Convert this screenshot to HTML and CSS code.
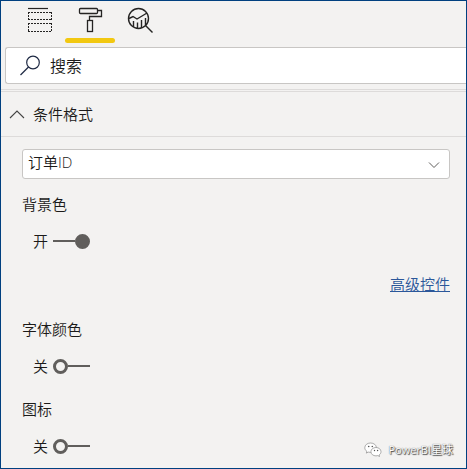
FILE: index.html
```html
<!DOCTYPE html>
<html lang="zh-CN">
<head>
  <meta charset="UTF-8" />
  <meta name="viewport" content="width=device-width, initial-scale=1.0"/>
  <title>条件格式</title>
  <link rel="stylesheet" href="styles.css">
</head>

<body>
  <main class="pane">
    <nav class="tabs">
      <button class="tab" type="button" aria-label="字段">
        <svg width="26" height="26" viewBox="0 0 26 26" fill="none" stroke="#252423">
          <path d="M1 1.500h20" stroke-width="1.200" />
          <path d="M1 5.500h24M1 12.500h24M1 16.500h24M1 24.500h24" stroke-dasharray="2 1" />
          <path d="M1.500 5v8M24.500 5v8M1.500 16v9M24.500 16v9" stroke-dasharray="2 1" />
        </svg>
      </button>
      <button class="tab active" type="button" aria-label="格式">
        <svg width="26" height="26" viewBox="0 0 26 26" fill="none" stroke="#252423" stroke-width="1.300">
          <rect x="2.500" y="1.500" width="18" height="5" rx="1" />
          <path d="M20.500 3.500h4v6h-12v4" />
          <rect x="10.500" y="13.500" width="5" height="11" />
        </svg>
      </button>
      <button class="tab" type="button" aria-label="分析">
        <svg width="26" height="26" viewBox="0 0 26 26" fill="none" stroke="#252423" stroke-width="1.400">
          <circle cx="11.500" cy="11.500" r="10" />
          <path d="M18.500 18.500l7 7" />
          <path d="M2 11.500l4-2 4 2.500 10-6" />
          <path d="M6.500 14v6M10.500 15.500v6M14.500 13v8M18.500 11v7" />
        </svg>
      </button>
    </nav>

    <label class="search">
      <svg width="22" height="22" viewBox="0 0 22 22" fill="none" stroke="#1f2a44" stroke-width="1.200">
        <circle cx="13" cy="7.500" r="6.300" />
        <path d="M8.500 12l-8 8" />
      </svg>
      <input type="text" placeholder="搜索" aria-label="搜索">
    </label>

    <button class="section-head" type="button">
      <svg width="16" height="10" viewBox="0 0 16 10" fill="none" stroke="#444" stroke-width="1.100">
        <path d="M1 9l7-7 7 7" />
      </svg>
      <span>条件格式</span>
    </button>

    <section class="options">
      <div class="select-box">
        <select aria-label="字段">
          <option>订单ID</option>
        </select>
        <svg class="arrow" width="12" height="8" viewBox="0 0 12 8" fill="none" stroke="#605e5c">
          <path d="M1 1.500l5 5 5-5" />
        </svg>
      </div>

      <div class="option">
        <label class="name" for="bg">背景色</label>
        <div class="toggle-row">
          <span>开</span>
          <input class="toggle" type="checkbox" id="bg" checked>
        </div>
        <a class="advanced" href="#">高级控件</a>
      </div>

      <div class="option">
        <label class="name" for="fc">字体颜色</label>
        <div class="toggle-row">
          <span>关</span>
          <input class="toggle" type="checkbox" id="fc">
        </div>
      </div>

      <div class="option">
        <label class="name" for="icon">图标</label>
        <div class="toggle-row">
          <span>关</span>
          <input class="toggle" type="checkbox" id="icon">
        </div>
      </div>
    </section>

    <div class="watermark">
      <svg width="18" height="16" viewBox="0 0 18 16" fill="#fff" stroke="#8a8a8a" stroke-width="0.700">
        <path d="M6.500 1C3.300 1 .8 3 .8 5.700c0 1.500.8 2.800 2 3.600l-.5 1.800 2-1c.7.200 1.500.3 2.200.3 3.300 0 5.900-2 5.900-4.700S9.800 1 6.500 1z" />
        <path d="M12 5.500c-2.900 0-5.100 1.900-5.100 4.200s2.200 4.200 5.100 4.200c.6 0 1.200-.1 1.800-.3l1.700.9-.4-1.500c1.200-.8 1.900-2 1.900-3.300 0-2.300-2.100-4.200-5-4.200z" />
        <g fill="#555" stroke="none">
          <circle cx="4.700" cy="4.500" r=".8" />
          <circle cx="8.300" cy="4.500" r=".8" />
          <circle cx="10.500" cy="8.500" r=".7" />
          <circle cx="13.600" cy="8.500" r=".7" />
        </g>
      </svg>
      <span>PowerBI星球</span>
    </div>
  </main>
</body>
</html>
```
FILE: styles.css
```css
*, *::before, *::after {
  box-sizing: border-box;
}

body {
  margin: 0;
  font-family: "Open Sans", "Noto Sans CJK SC", sans-serif;
  font-size: 15px;
  font-weight: 350;
  line-height: 20px;
  color: #1b1a19;
  background: #f3f2f1;
}

button, input, select {
  font: inherit;
  color: inherit;
}

svg {
  display: block;
  flex: none;
}

.pane {
  position: relative;
  min-height: 100vh;
  border: 1px solid #004080;
  overflow: hidden;
}

/* tabs */
.tabs {
  display: flex;
  height: 42px;
  padding-left: 14px;
}

.tab {
  display: flex;
  justify-content: center;
  width: 50px;
  padding: 6px 0 0;
  border: none;
  background: none;
  cursor: pointer;
}

.tab.active {
  position: relative;
}

.tab.active::after {
  content: "";
  position: absolute;
  left: 0;
  right: 0;
  bottom: 0;
  height: 5px;
  border-radius: 3px;
  background: #f2c811;
}

/* search */
.search {
  display: flex;
  align-items: center;
  gap: 8px;
  height: 37px;
  margin: 4px 0 5px 4px;
  padding-left: 14px;
  border: 1px solid #c8c6c4;
  border-right: none;
  border-radius: 3px 0 0 3px;
  background: #fff;
}

.search input {
  flex: 1;
  min-width: 0;
  padding: 0;
  border: none;
  outline: none;
  background: none;
  font-size: 16px;
}

.search input::placeholder {
  color: #1b1a19;
  opacity: 1;
}

.section-head {
  display: flex;
  align-items: center;
  gap: 8px;
  width: 100%;
  height: 48px;
  padding: 0 8px;
  border: solid #dddbda;
  border-width: 3px 0 1px;
  border-top-style: double;
  background: none;
  cursor: pointer;
}

/* options */
.options {
  padding: 12px 16px 10px 21px;
}

.select-box {
  position: relative;
  margin-bottom: 15px;
}

.select-box select {
  display: block;
  width: 100%;
  height: 30px;
  padding: 0 24px 4px 5px;
  border: 1px solid #c8c6c4;
  border-radius: 3px;
  background: #fff;
  appearance: none;
}

.arrow {
  position: absolute;
  right: 10px;
  top: 12px;
  pointer-events: none;
}

.option {
  display: flex;
  flex-direction: column;
  margin-bottom: 23px;
}

.option:last-child {
  margin-bottom: 0;
}

.toggle-row {
  display: flex;
  align-items: center;
  gap: 5px;
  margin: 17px 0 0 11px;
}

.toggle {
  display: flex;
  align-items: center;
  width: 37px;
  height: 15px;
  margin: 0;
  appearance: none;
  cursor: pointer;
}

.toggle::before {
  content: "";
  width: 15px;
  height: 15px;
  border: 3px solid #605e5c;
  border-radius: 50%;
}

.toggle::after {
  content: "";
  flex: 1;
  height: 2px;
  background: #605e5c;
}

.toggle:checked {
  flex-direction: row-reverse;
}

.toggle:checked::before {
  background: #605e5c;
}

.advanced {
  align-self: flex-end;
  margin: 23px 0 2px;
  color: #2b579a;
}

/* account name over the pane corner */
.watermark {
  position: absolute;
  right: 13px;
  bottom: 8px;
  display: flex;
  align-items: center;
  gap: 6px;
  font-size: 11px;
  font-weight: 400;
  color: #fff;
  text-shadow: 1px 1px 1px #444, 0 0 1px #444;
}
```
